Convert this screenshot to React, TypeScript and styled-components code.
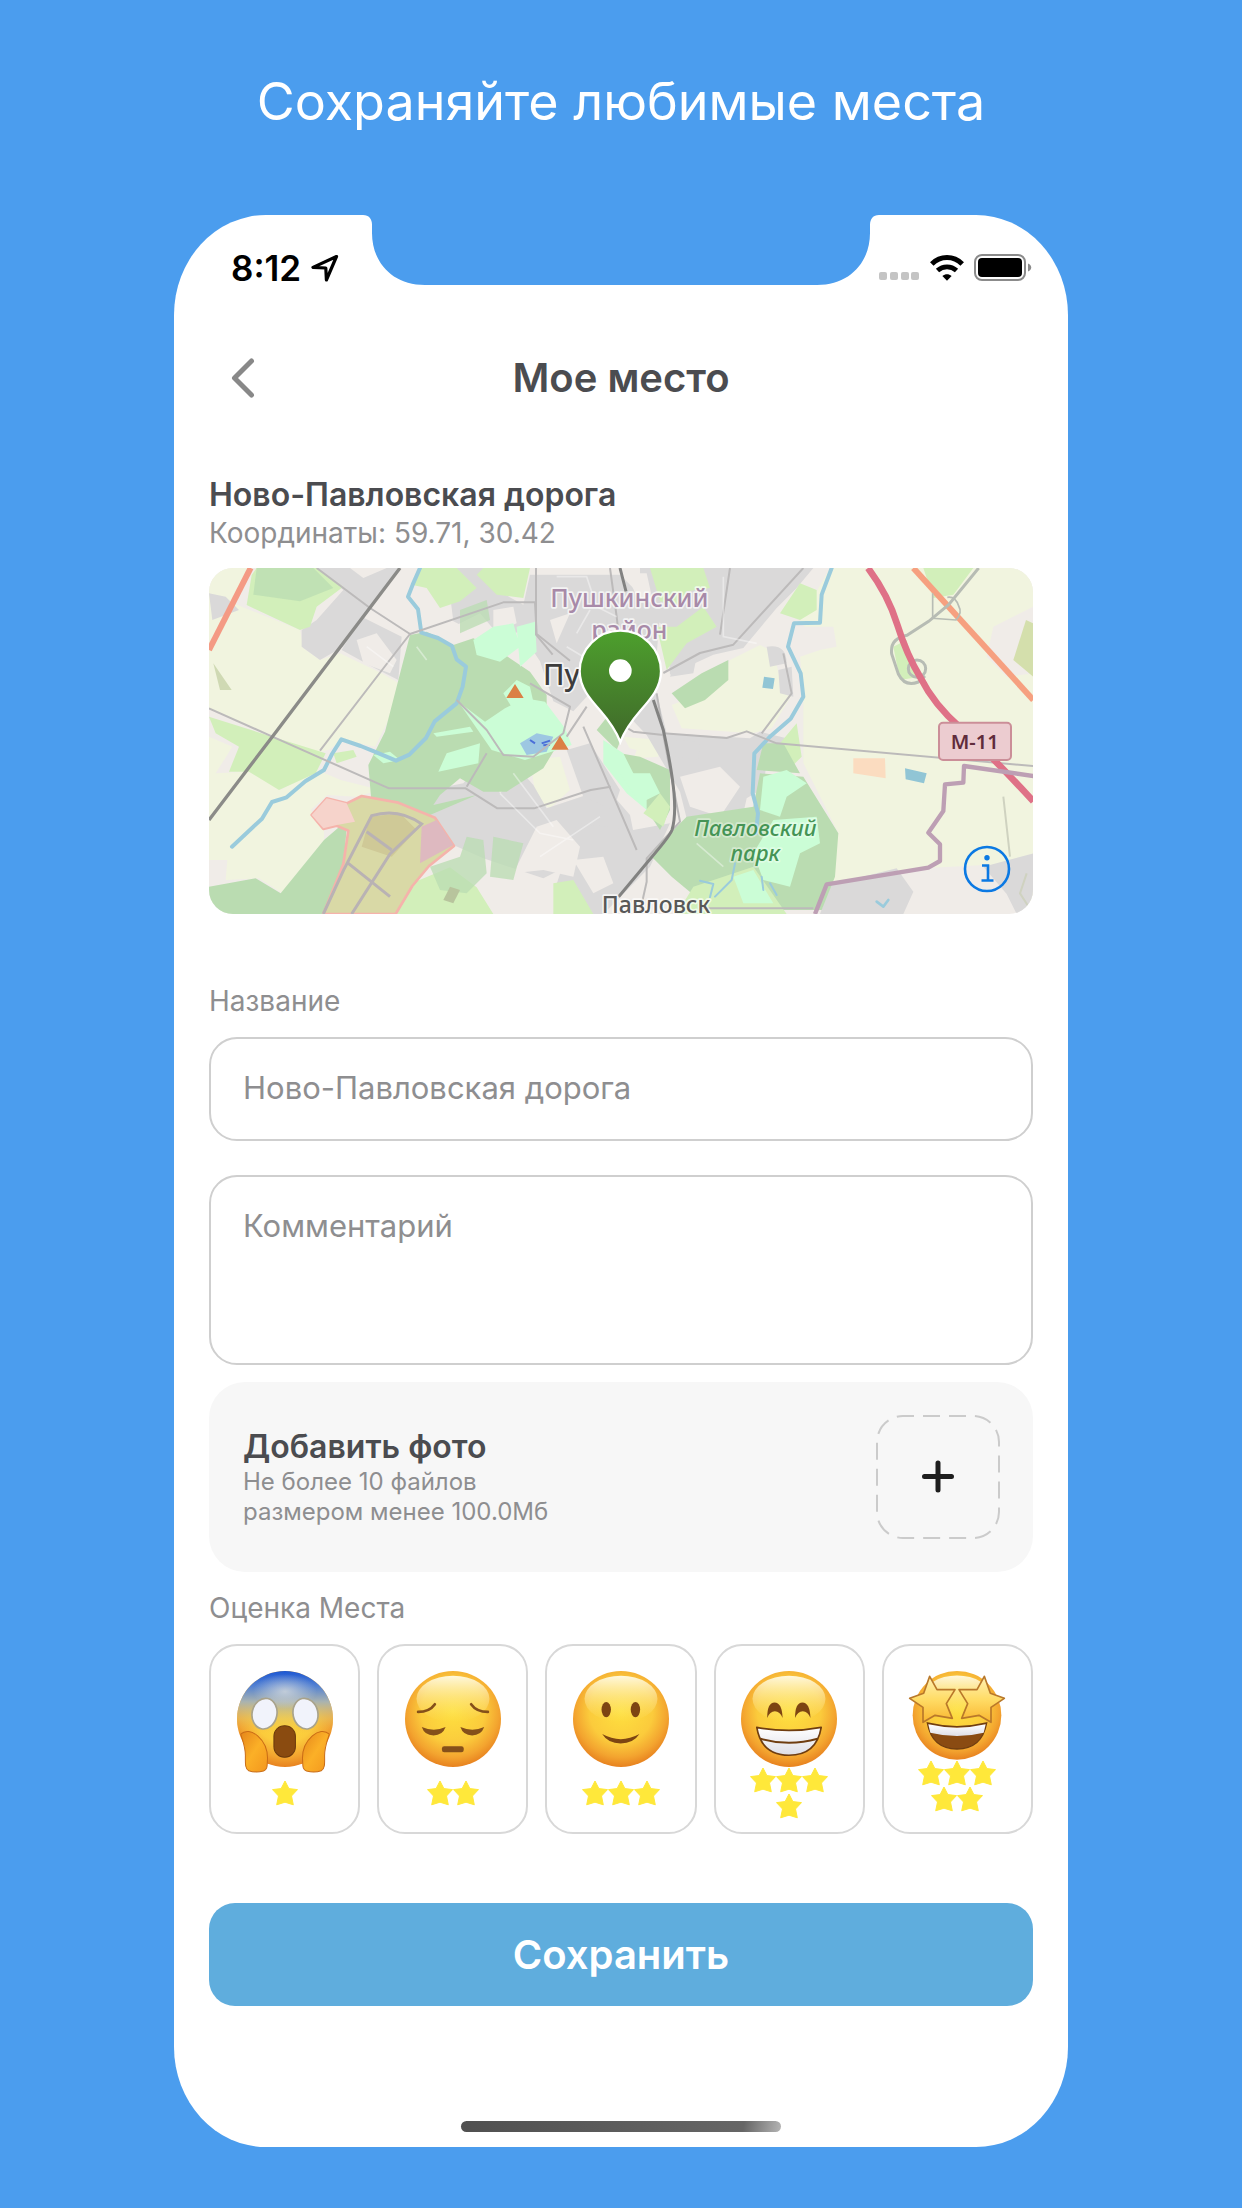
import React, { ReactNode } from "react";
import styled, { createGlobalStyle } from "styled-components";

const GlobalStyle = createGlobalStyle`
  *, *::before, *::after { box-sizing: border-box; }
  body {
    margin: 0;
    background: #4b9dee;
    font-family: Inter, "Noto Sans", sans-serif;
    -webkit-font-smoothing: antialiased;
  }
  button, input, textarea { font-family: inherit; }
`;

const Page = styled.main`
  min-height: 100vh;
  padding: 68px 174px 60px;
  background: #4b9dee;
`;

const Headline = styled.h1`
  margin: 0 0 79px;
  color: #fff;
  font-size: 52px;
  font-weight: 400;
  line-height: 68px;
  text-align: center;
  white-space: nowrap;
`;

const Phone = styled.section`
  display: flex;
  flex-direction: column;
  background: #fff;
  border-radius: 92px / 100px;
  overflow: hidden;
`;

const StatusBar = styled.div`
  display: grid;
  grid-template-columns: 1fr 516px 1fr;
  align-items: start;
  height: 110px;
`;

const StatusSide = styled.div<{ $end?: boolean }>`
  display: flex;
  align-items: center;
  justify-content: ${(p) => (p.$end ? "flex-end" : "flex-start")};
  gap: 10px;
  padding: ${(p) => (p.$end ? "32px 36px 0 0" : "32px 0 0 57px")};
  height: 74px;
`;

const Clock = styled.time`
  color: #000;
  font-size: 35px;
  font-weight: 600;
  line-height: 42px;
`;

const Notch = styled.svg`
  display: block;
  width: 516px;
  height: 71px;
`;

const NavBar = styled.header`
  display: grid;
  grid-template-columns: 68px 1fr 68px;
  align-items: center;
  height: 106px;
  padding: 0 35px;
`;

const BackButton = styled.button`
  display: flex;
  justify-content: center;
  padding: 8px 0;
  border: 0;
  background: none;
`;

const NavTitle = styled.h2`
  margin: 0;
  color: #4b4c50;
  font-size: 40px;
  font-weight: 600;
  line-height: 52px;
  text-align: center;
`;

const Content = styled.form`
  display: flex;
  flex-direction: column;
  padding: 44px 35px 16px;
`;

const SectionTitle = styled.h3`
  margin: 0;
  color: #4b4c50;
  font-size: 32px;
  font-weight: 600;
  line-height: 40px;
`;

const Caption = styled.p`
  margin: 0 0 17px;
  color: #8e8e90;
  font-size: 28px;
  line-height: 36px;
`;

const MapCard = styled.div`
  position: relative;
  margin-bottom: 69px;
  height: 346px;
  border-radius: 24px;
  overflow: hidden;
  & > svg { display: block; width: 100%; height: 100%; }
`;

const InfoButton = styled.button`
  position: absolute;
  right: 22px;
  bottom: 21px;
  display: block;
  width: 48px;
  height: 48px;
  padding: 0;
  border: 0;
  background: none;
`;

const FieldLabel = styled.label`
  margin-bottom: 18px;
  color: #8e8e90;
  font-size: 28px;
  line-height: 36px;
`;

const TextInput = styled.input`
  height: 104px;
  margin-bottom: 34px;
  padding: 0 32px 4px;
  border: 2px solid #cfcfcf;
  border-radius: 28px;
  background: #fff;
  color: #8e8e90;
  font-size: 31px;
  outline: none;
`;

const TextBox = styled.textarea`
  height: 190px;
  margin-bottom: 17px;
  padding: 29px 32px;
  border: 2px solid #cfcfcf;
  border-radius: 28px;
  background: #fff;
  color: #8e8e90;
  font-size: 31px;
  line-height: 40px;
  resize: none;
  outline: none;
  &::placeholder { color: #8e8e90; opacity: 1; }
`;

const PhotoCard = styled.section`
  display: flex;
  align-items: center;
  justify-content: space-between;
  height: 190px;
  margin-bottom: 18px;
  padding: 0 33px 0 34px;
  border-radius: 36px;
  background: #f7f7f7;
`;

const PhotoHint = styled.p`
  margin: 0;
  color: #8e8e90;
  font-size: 24px;
  line-height: 30px;
`;

const AddButton = styled.button`
  display: block;
  width: 124px;
  height: 124px;
  padding: 0;
  border: 0;
  background: none;
`;

const Ratings = styled.fieldset`
  margin: 0 0 69px;
  padding: 0;
  border: 0;
  min-width: 0;
`;

const RatingsLegend = styled.legend`
  padding: 0 0 18px;
  color: #8e8e90;
  font-size: 28px;
  line-height: 36px;
`;

const RatingRow = styled.div`
  display: grid;
  grid-template-columns: repeat(5, 1fr);
  gap: 17px;
`;

const RatingCard = styled.label`
  display: flex;
  flex-direction: column;
  align-items: center;
  height: 190px;
  padding-top: 25px;
  border: 2px solid #d8d8d8;
  border-radius: 28px;
`;

const HiddenRadio = styled.input`
  position: absolute;
  width: 1px;
  height: 1px;
  margin: 0;
  opacity: 0;
`;

const Face = styled.svg`
  display: block;
  flex: none;
  width: 96px;
  overflow: visible;
`;

const Stars = styled.span`
  display: flex;
  flex: none;
  flex-wrap: wrap;
  align-content: center;
  justify-content: center;
  width: 78px;
  height: 52px;
`;

const SaveButton = styled.button`
  height: 103px;
  border: 0;
  border-radius: 26px;
  background: #5faddd;
  color: #fff;
  font-size: 40px;
  font-weight: 600;
`;

const HomeBar = styled.div`
  align-self: center;
  width: 320px;
  height: 11px;
  margin: 99px 0 15px;
  border-radius: 6px;
  background: linear-gradient(100deg, #505050 0%, #666 88%, #b4b4b4 100%);
`;

const PaintStore = styled.svg`
  position: absolute;
  width: 0;
  height: 0;
`;

function LocationArrow() {
  return (
    <svg width="28" height="28" viewBox="0 0 28 28" fill="none" stroke="#000" strokeWidth="3.2" strokeLinejoin="round">
      <path d="M25.5 2.5 2 13.4l12.8.6.6 12z" />
    </svg>
  );
}

function SignalDots() {
  return (
    <svg width="41" height="28" viewBox="0 0 41 28" fill="#c4c4c4">
      {[0, 11, 22, 32].map((x) => (
        <rect key={x} x={x} y="18" width="8" height="8" rx="2" />
      ))}
    </svg>
  );
}

function WifiIcon() {
  return (
    <svg width="34" height="26" viewBox="0 0 34 26">
      <path d="M1.800 9C6 4.800 11.200 2.600 17 2.600S28 4.800 32.200 9" fill="none" stroke="#000" strokeWidth="5" />
      <path d="M7.500 15.600c2.700-2.500 5.800-3.800 9.500-3.800s6.800 1.300 9.500 3.800" fill="none" stroke="#000" strokeWidth="4.800" />
      <path d="M12.400 21c2.800-2.400 6.400-2.400 9.200 0L17 25.800z" />
    </svg>
  );
}

function BatteryIcon() {
  return (
    <svg width="58" height="28" viewBox="0 0 58 28">
      <rect x="1" y="1" width="50" height="25" rx="7" fill="none" stroke="#8b8b8b" strokeWidth="2" />
      <rect x="4" y="4" width="44" height="19" rx="4" />
      <path d="M54 9.500c4.300 1.400 4.300 6.600 0 8z" fill="#8b8b8b" />
    </svg>
  );
}

function Star() {
  return (
    <svg width="26" height="26" viewBox="0 0 26 26">
      <path
        d="M13 1l3.900 7.600 8.600 1-6 6.400 1.800 8.800-8.300-2.600-8.300 2.600L6.500 16l-6-6.400 8.600-1z"
        fill="#ffe83a"
        stroke="#ffe83a"
        strokeLinejoin="round"
      />
    </svg>
  );
}

function EmojiPaints() {
  return (
    <PaintStore aria-hidden="true">
      <defs>
        <radialGradient id="skin" cx="50%" cy="42%" r="60%">
          <stop offset="0" stopColor="#fee03f" />
          <stop offset=".55" stopColor="#fbcb3c" />
          <stop offset=".8" stopColor="#f3a42f" />
          <stop offset="1" stopColor="#e57b1c" />
        </radialGradient>
        <linearGradient id="shine" x1="0" y1="0" x2="0" y2="1">
          <stop offset="0" stopColor="#fffbe6" stopOpacity=".95" />
          <stop offset="1" stopColor="#ffe878" stopOpacity="0" />
        </linearGradient>
        <linearGradient id="fright" x1="0" y1="0" x2="0" y2="1">
          <stop offset="0" stopColor="#1c57d3" />
          <stop offset=".16" stopColor="#5482d2" />
          <stop offset=".32" stopColor="#a9b3b0" />
          <stop offset=".5" stopColor="#e3bf62" stopOpacity=".6" />
          <stop offset=".65" stopColor="#f0b040" stopOpacity="0" />
        </linearGradient>
        <radialGradient id="frost" cx="50%" cy="50%" r="50%">
          <stop offset="0" stopColor="#cfd6dc" stopOpacity=".85" />
          <stop offset="1" stopColor="#cfd6dc" stopOpacity="0" />
        </radialGradient>
        <linearGradient id="hand" x1="0" y1="0" x2="1" y2="1">
          <stop offset="0" stopColor="#e5851b" />
          <stop offset=".5" stopColor="#fbb027" />
          <stop offset="1" stopColor="#f3961d" />
        </linearGradient>
        <linearGradient id="starEye" x1="0" y1="0" x2="0" y2="1">
          <stop offset="0" stopColor="#fff0b4" />
          <stop offset=".5" stopColor="#ffdc66" />
          <stop offset="1" stopColor="#f9b52e" />
        </linearGradient>
        <linearGradient id="teeth" x1="0" y1="0" x2="0" y2="1">
          <stop offset="0" stopColor="#fff" />
          <stop offset="1" stopColor="#dedee6" />
        </linearGradient>
      </defs>
    </PaintStore>
  );
}

function Head({ cx, cy, r }: { cx: number; cy: number; r: number }) {
  return (
    <>
      <circle cx={cx} cy={cy} r={r} fill="url(#skin)" />
      <ellipse cx={cx} cy={cy - r * 0.42} rx={r * 0.76} ry={r * 0.48} fill="url(#shine)" />
    </>
  );
}

function ScaredFace() {
  return (
    <Face viewBox="110 124 286 286" height="96">
      <circle cx="253" cy="267" r="143" fill="url(#skin)" />
      <circle cx="253" cy="267" r="143" fill="url(#fright)" />
      <ellipse cx="253" cy="185" rx="95" ry="52" fill="url(#frost)" />
      <ellipse cx="192" cy="251" rx="37" ry="46" transform="rotate(12 192 251)" fill="#f1f3fb" stroke="#a9a38c" strokeWidth="5" />
      <ellipse cx="314" cy="251" rx="37" ry="46" transform="rotate(-12 314 251)" fill="#f1f3fb" stroke="#a9a38c" strokeWidth="5" />
      <rect x="220" y="287" width="64" height="94" rx="31" fill="#8a4b10" stroke="#6b3a0c" strokeWidth="3" />
      <path d="M121 312c28-26 80 16 80 72-2 20 2 32-12 38-16 4-30 4-44-1-12-6-10-24-10-46 0-24-8-44-14-63z" fill="url(#hand)" stroke="#c96c16" strokeWidth="3" />
      <path d="M385 312c-28-26-80 16-80 72 2 20-2 32 12 38 16 4 30 4 44-1 12-6 10-24 10-46 0-24 8-44 14-63z" fill="url(#hand)" stroke="#c96c16" strokeWidth="3" />
    </Face>
  );
}

function PensiveFace() {
  return (
    <Face viewBox="615 124 286 286" height="96">
      <Head cx={758} cy={267} r={143} />
      <g fill="none" stroke="#85501a" strokeWidth="8" strokeLinecap="round">
        <path d="M654 246q34 0 50-23" />
        <path d="M862 246q-34 0-50-23" />
      </g>
      <g fill="#85501a">
        <path d="M665 291q36 16 71 0-9 25-36 25t-35-25z" />
        <path d="M780 291q36 16 71 0-9 25-36 25t-35-25z" />
        <rect x="725" y="348" width="65" height="18" rx="7" />
      </g>
    </Face>
  );
}

function SmileFace() {
  return (
    <Face viewBox="1120 124 286 286" height="96">
      <Head cx={1263} cy={267} r={143} />
      <ellipse cx="1219" cy="239" rx="14" ry="23" fill="#7d4512" />
      <ellipse cx="1306" cy="239" rx="14" ry="23" fill="#7d4512" />
      <path d="M1207 312q55 30 111 0-18 28-56 28t-55-28z" fill="#7d4512" />
    </Face>
  );
}

function GrinFace() {
  return (
    <Face viewBox="366 124 286 286" height="96">
      <Head cx={509} cy={267} r={143} />
      <g fill="#7d4512">
        <path d="M444 264q0-46 22-46t24 46q-8-20-23-20t-23 20z" />
        <path d="M527 264q0-46 22-46t24 46q-8-20-23-20t-23 20z" />
      </g>
      <path d="M413 292q96 18 192 0-14 83-96 83t-96-83z" fill="url(#teeth)" stroke="#6f3d10" strokeWidth="5" strokeLinejoin="round" />
      <path d="M424 326q85 24 170 0" fill="none" stroke="#6f3d10" strokeWidth="6" />
    </Face>
  );
}

function StarStruckFace() {
  const eye = "M932 140l22 40h54l-26 42 18 44-52-9-36 21v-45l-40-27 42-15z";
  return (
    <Face viewBox="870 124 288 267" height="89">
      <Head cx={1014} cy={257} r={133} />
      <path d="M925 280q89 22 178 0-14 78-89 78t-89-78z" fill="#8a4b12" stroke="#6f3d10" strokeWidth="4" />
      <path d="M928 284q86 20 172 0l-6 25q-80 20-160 0z" fill="url(#teeth)" />
      <g fill="url(#starEye)" stroke="#b9782a" strokeWidth="5" strokeLinejoin="round">
        <path d={eye} />
        <path d={eye} transform="translate(2028 0) scale(-1 1)" />
      </g>
    </Face>
  );
}

const ratings: { name: string; stars: number; face: ReactNode }[] = [
  { name: "Ужасно", stars: 1, face: <ScaredFace /> },
  { name: "Плохо", stars: 2, face: <PensiveFace /> },
  { name: "Нормально", stars: 3, face: <SmileFace /> },
  { name: "Хорошо", stars: 4, face: <GrinFace /> },
  { name: "Отлично", stars: 5, face: <StarStruckFace /> },
];

const town = "#dad9d9";
const field = "#f1f4df";
const wood = "#badcb1";
const grass = "#d2efba";
const park = "#cbfdd6";
const soil = "#f0ece8";

// Three map units make one CSS pixel.
function TownMap() {
  return (
    <svg viewBox="27 324 2472 1038" preserveAspectRatio="xMidYMid slice" role="img" aria-label="Карта">
      <defs>
        <linearGradient id="pin" x1="0" y1="0" x2="0" y2="1">
          <stop offset="0" stopColor="#4d9f2d" />
          <stop offset="1" stopColor="#40692a" />
        </linearGradient>
      </defs>
      <rect x="27" y="324" width="2473" height="1038" fill={soil} />

      {/* Farmland */}
      <g fill={field}>
        <path d="M27 324h130L100 430l200 80 10 55 50 35 60-20 125 60 70 40-90 180-95-20-45 30-45 10L27 745z" />
        <path d="M27 830l70 30-50 80 100-5 95 55 110-60 70 30 120 30-75 20-85-5-50 45 40 50v40l-80 100-45 60-70-45-100 5 5-60H27z" />
        <path d="M1890 324h610v1010l-130-120-190 10-290 45 25-150-105-210V700l-10-110 60-20-60-90z" />
        <path d="M1590 600l90-45 40 20 20 80 35 50-60 100-60 15-210-15-30-70 80-30 70-50 20-40z" />
        <path d="M1270 830l110 10-5 50-70 5zM990 900l90-10 30 100-60 55-40-20z" />
      </g>
      <path d="M1770 500l130 0 10 60-130 25zM2380 500l120-60v200l-80 10-60-60z" fill={soil} />

      {/* Built-up areas */}
      <g fill={town}>
        <path d="M350 324h250L430 560l-70 40-55-40 0-50 45-30 80-90z" />
        <path d="M27 400l50 10 40 40-80 30zM425 570l60-100 120 60-10 130-70-35z" />
        <path d="M740 324h120l20 60 90 50 20-90h270l120 120-10 120-60 70-80-20-110 120-60-30-40-120-60-90-80 30-120-60z" />
        <path d="M1580 324h260l-50 60-60 60-100 120-90 20-130 60-10-140-80-60v-120z" />
        <path d="M1240 720l130-20 30 120 250 15 30-20 80 20-60 70-10 80-50 30-20 90-150 10-30-120-100-170z" />
        <path d="M690 990l100-20 70-80 60-5 80 90 40 70 180-60 70 80 30 150-80 60-150-50-60 30-180-60-90-40-90-60z" />
        <path d="M1100 870l70-20 90 140-20 60-90-40zM1130 1090l170 20 110-20-60 130-140 142h-60l-80-90z" />
        <path d="M1430 600q60-40 60-10l-10 50-70 10zM1700 560q60-10 60 50l-50 10zM1735 630l40-10 5 90-40-10zM1430 840l70 5-5 55-70-10z" />
        <path d="M1890 1275l200-50 50 70-30 67H1860zM2350 1220l150-40v182h-50l-30-60z" />
      </g>

      {/* Soft openings between the blocks */}
      <g fill={soil}>
        <path d="M470 540l60-20 60 80-20 40-80-30zM760 500l80-40 60 70-80 30zM450 324l110 0-70 30zM880 450l60-10 10 50-70 30zM1050 480l60-20-40 90zM1280 340l60 0 20 90-50-20zM1010 1100l60-20 70 80-20 90-90-20-90 10zM1440 950l120-30 60 60-60 90-90-30zM860 930l40-20 40 50-40 40zM1270 860l40 10-10 30zM1120 1200l90-10 30 80-60 30zM860 1290l30-60 90 30-20 102h-50z" />
      </g>

      {/* Grass */}
      <g fill={grass}>
        <path d="M170 324h180l80 56-80 60-20 60-30 10-160-75 15-90z" />
        <path d="M27 770l190 60 160 50-30 60-110 50-90-55h-60l30-75-70-40z" />
        <path d="M660 324h110l60 60-50 40-60 20-40-60-45-10zM850 324h140l-20 90-80-10-60-60zM1350 324h160l20 60-70 10-20 40-60-10zM1800 370l50 20 0 60-50 30-60-20z" />
        <path d="M1060 1270l60-10 60 102h-120zM590 1362l40-90 120-50 80 60 50 80zM400 880l60-10 10 20-60 20zM2170 324h150l-60 80-60 10zM1740 850l50-60 15 100-60 60z" />
        <path d="M2080 560l40-20 10 60 30 50-60 10zM1370 500l60 0 80-60 40 60-90 50-60 80z" />
      </g>

      {/* Woods */}
      <g fill={wood}>
        <path d="M630 525l50-10 80 40 60-20 80 40 90 60 50 70 0 60 50 60-60 100-110 70-70 0-70-40-60 50-20 30 130-30-140 60-110 20-65-50-10-120 50-100z" />
        <path d="M27 1280l140-25 75 45 130-160 70-60-10 120-60 162H27z" />
        <path d="M170 324h170l60 60-100 40-140-20zM780 450l80-30 10 60-90 40zM880 1130l90 20-30 110-70-10zM690 1220l90-30 20-60 50 10 10 100-60 60-80-10z" fillOpacity=".75" />
        <path d="M1260 880l60 10 90 40 0 120-30 60-60-90zM1370 1160l90-90 200-30 20-100 130 10 105 170-10 130-40 100h-330l-120-100-60-60z" />
        <path d="M1415 700l90-60 80-40 0 60-70 60-60 25zM1690 850l60 0 50 90-130-10zM1230 760l40 60-20 50-60-60z" />
      </g>
      <g fill={grass}>
        <path d="M1480 1280l180-60 100 142h-330zM1330 1060l50-60 30 40-20 60z" />
      </g>

      {/* Parks */}
      <g fill={park}>
        <path d="M820 540l60-40 60-10 20 70-60 45-70-20zM950 500l55-15 5 90-50 45z" />
        <path d="M775 725l80 60 60-40 60-30 60 10 60 80 20 50-60 20-80 25-100-30zM740 880l100-30-5 60-120 25zM520 885l50-10 30 25-50 10z" />
        <path d="M910 700l40-40 40 20 20 90-70-20zM700 820l110-20 10 15-110 15z" />
        <path d="M1210 840l60 40 30 60 40 60 0 50-60-50-70-90zM1690 950l70-20 60 40-60 40-20 60-60-20zM1720 1080l130-10 10 80-60 30-30 100-80-20-30-80z" />
        <path d="M1260 940l90 0 30 60-60 30zM1600 1250l60-20 60 100h-90z" />
      </g>

      {/* Reserve */}
      <path d="M335 1065l45-50 60 15 45-22 110 20 110 45 57 85-75 60-50 60-50 84H370l60-150 15-100-35-15-40 10z" fill="#d9d9a6" stroke="#f5b3ab" strokeWidth="8" strokeLinejoin="round" />
      <path d="M335 1065l45-50 60 15 25 55-55 10-40 10z" fill="#f6d3cb" />
      <path d="M665 1100l45-20 50 75-100 55z" fill="#deb9c0" />
      <path d="M510 1070l90-10 50 50-75 80-90-30z" fill="#cfc997" />

      {/* Small plots */}
      <g>
        <path d="M1960 895l95 0 2 60-97-15z" fill="#fbdcc0" />
        <path d="M2115 925l65 15-8 30-55-12zM1692 650l32 5-5 32-32-4z" fill="#91c5d5" />
        <path d="M2478 480l22 10v160l-60-50z" fill="#d4dfac" />
        <path d="M960 850l50-30 50 10-20 45-60 10z" fill="#9dc7e2" />
        <path d="M40 610l55 80-35 0z" fill="#cfd9b3" />
        <path d="M750 1280l30 10-20 40-30-10z" fill="#b8c49d" />
        <path d="M990 840l15 10m20 0l25-8m-20 14l20-2" fill="none" stroke="#4b6fd8" strokeWidth="6" />
      </g>

      {/* Water */}
      <g fill="none" stroke="#9acbdc" strokeLinejoin="round" strokeLinecap="round" strokeWidth="12">
        <path d="M660 324l-22 50-14 36 30 38 10 70 50 16 42 24 14 40 28 22-10 60-18 50-66 54-26 50-50 50-40 18-66-28-40-16-58-20-28 44-24 48-56 34-56 48-44 14-30 50-90 84" />
        <path d="M1895 324l-30 80-5 84-78 2-18 70 38 80 8 70-38 66-64 56-45 48-5 120 16 60-6 60" />
        <path d="M1605 1210l-10 50-50 50M1500 1262l40 10-10 40M1685 1250l5 40m20-20l20 35" strokeWidth="6" />
        <path d="M2030 1325l20 15 15-20" strokeWidth="8" />
      </g>

      {/* Minor roads */}
      <g fill="none" stroke="#bcbaba" strokeWidth="6" strokeLinejoin="round">
        <path d="M27 745l190 85 350 155h230l95 60 110 0 170-55 60-10" />
        <path d="M350 324l160 120 120 78 280-95h95l5 95 100 80" />
        <path d="M630 522l-70 90-200 260M1008 324v200l50 60" />
        <path d="M770 720l90 90 50 75 90 5 90-70 20-80-120-70M1100 830l60-90M860 880l-60 100" />
        <path d="M1810 324l-210 230-100 25-110 60M1370 700l20 120 190 14 60-20 90 36 770 68" />
        <path d="M1390 825l50 260-100 110v70l-20 90M1240 780l60 35 90 10M1750 580l25 120-90 120" />
        <path d="M1260 560l-10-90-20-146M1590 324l-30 200M1150 800l100 230 60 140M1500 1345l340 0" />
        <path d="M2410 1010l20 180M2480 1240l-20 60 40 62" stroke="#cfd2c0" />
      </g>
      <g fill="none" stroke="#fff" strokeWidth="5" opacity=".4">
        <path d="M1070 350h90l30 90 60 30M1100 560l100 60M1130 520l40-70M500 560l80 60M1570 350v180l100 20M900 1000l120 120 100 20M940 940l120 160M1020 1190l180-120M1490 1150l80 70M650 560l30 40" />
      </g>
      <g fill="none" stroke="#b9b2b4" strokeWidth="9">
        <path d="M370 1362l60-130 85-165q80-25 150 25l-95 90-115 180M445 1210l125 100M500 1115l75 55" />
      </g>

      {/* Railways */}
      <path d="M600 324L217 830 27 1080" fill="none" stroke="#8b8b88" strokeWidth="10" />
      <path d="M1260 324l18 70M1360 720l30 90q26 120 32 190t-6 110q-8 20-60 80l-100 120" fill="none" stroke="#828281" strokeWidth="9" />

      {/* Highways */}
      <path d="M152 324L27 570" fill="none" stroke="#f49a84" strokeWidth="18" />
      <path d="M2140 324l360 396" fill="none" stroke="#f6a080" strokeWidth="18" />
      <g fill="none" stroke="#b7bcb4">
        <path d="M2336 324l-90 110-60 50-65 42q-52 10-46 56l20 60q20 40 60 24l20-18" strokeWidth="9" />
        <circle cx="2151" cy="626" r="26" strokeWidth="9" />
        <path d="M2198 400v75l70 5q20-22 8-42-10-30-34-26" strokeWidth="5" />
      </g>
      <path d="M2004 324q60 80 88 170t70 160q40 80 120 150t218 220" fill="none" stroke="#df7187" strokeWidth="20" />

      {/* District border */}
      <path d="M2500 948l-208-30-2 50-55 5-5 80-45 65 35 35 0 50-35 20-305 50-35 89" fill="none" stroke="#bd9fb4" strokeWidth="13" strokeLinejoin="round" />

      <g fill="#db8045">
        <path d="M945 672l26 42h-52zM1080 827l26 42h-52z" />
      </g>

      {/* Place names */}
      <g fontFamily="'Noto Sans', sans-serif" fontWeight="500" textAnchor="middle" paintOrder="stroke" stroke="#fff" strokeOpacity=".7" strokeWidth="10" strokeLinejoin="round">
        <text x="1288" y="440" fontSize="75" fill="#a88aa8">Пушкинский</text>
        <text x="1288" y="537" fontSize="75" fill="#a88aa8">район</text>
        <text x="1084" y="675" fontSize="87" fill="#3c3c3c">Пу</text>
        <text x="1368" y="1360" fontSize="69" fill="#585858">Павловск</text>
        <g fontStyle="italic" fill="#459455" strokeOpacity=".4">
          <text x="1666" y="1127" fontSize="66">Павловский</text>
          <text x="1666" y="1203" fontSize="66">парк</text>
        </g>
      </g>
      <rect x="2217" y="788" width="216" height="112" rx="12" fill="#ecccd0" stroke="#cb8e98" strokeWidth="6" />
      <text x="2324" y="866" fontSize="60" fontWeight="600" textAnchor="middle" fontFamily="'Noto Sans', sans-serif" fill="#602c3c">М-11</text>

      <path
        d="M1261 512a122 122 0 0 1 122 122c0 48-30 82-62 118-26 30-46 56-60 94-14-38-34-64-60-94-32-36-62-70-62-118a122 122 0 0 1 122-122z"
        fill="url(#pin)"
        stroke="#fff"
        strokeWidth="7"
      />
      <circle cx="1261" cy="632" r="34" fill="#fff" />
    </svg>
  );
}

export default function App() {
  return (
    <Page>
      <GlobalStyle />
      <EmojiPaints />
      <Headline>Сохраняйте любимые места</Headline>
      <Phone>
        <StatusBar>
          <StatusSide>
            <Clock>8:12</Clock>
            <LocationArrow />
          </StatusSide>
          <Notch viewBox="0 0 516 71" aria-hidden="true">
            <path d="M0 0c6 0 9 4 9 10v8c0 29 20 52 53 52h392c33 0 53-23 53-52v-8c0-6 3-10 9-10z" fill="#4b9dee" />
          </Notch>
          <StatusSide $end>
            <SignalDots />
            <WifiIcon />
            <BatteryIcon />
          </StatusSide>
        </StatusBar>
        <NavBar>
          <BackButton type="button" aria-label="Назад">
            <svg width="24" height="40" viewBox="0 0 24 40" fill="none" stroke="#888" strokeWidth="5" strokeLinecap="round" strokeLinejoin="round">
              <path d="M20.500 3 3.500 20l17 17" />
            </svg>
          </BackButton>
          <NavTitle>Мое место</NavTitle>
        </NavBar>
        <Content>
          <SectionTitle>Ново-Павловская дорога</SectionTitle>
          <Caption>Координаты: 59.71, 30.42</Caption>
          <MapCard>
            <TownMap />
            <InfoButton type="button" aria-label="О карте">
              <svg width="48" height="48" viewBox="0 0 48 48" fill="none" stroke="#0b79e3" strokeWidth="2.600">
                <circle cx="24" cy="24" r="22" />
                <path d="M19 20.500h6v15M18.500 35.500h12" />
                <circle cx="24" cy="12.800" r="2.700" fill="#0b79e3" stroke="none" />
              </svg>
            </InfoButton>
          </MapCard>
          <FieldLabel htmlFor="place-name">Название</FieldLabel>
          <TextInput id="place-name" defaultValue="Ново-Павловская дорога" />
          <TextBox aria-label="Комментарий" placeholder="Комментарий" />
          <PhotoCard>
            <div>
              <SectionTitle>Добавить фото</SectionTitle>
              <PhotoHint>
                Не более 10 файлов
                <br />
                размером менее 100.0Мб
              </PhotoHint>
            </div>
            <AddButton type="button" aria-label="Добавить фото">
              <svg width="124" height="124" viewBox="0 0 124 124" fill="none">
                <rect x="1" y="1" width="122" height="122" rx="26" stroke="#cbcbcb" strokeWidth="2" strokeDasharray="17 9" strokeDashoffset="6" />
                <path d="M62 48v27M48.500 61.500h27" stroke="#1e1e1e" strokeWidth="5" strokeLinecap="round" />
              </svg>
            </AddButton>
          </PhotoCard>
          <Ratings>
            <RatingsLegend>Оценка Места</RatingsLegend>
            <RatingRow>
              {ratings.map((r) => (
                <RatingCard key={r.stars}>
                  <HiddenRadio type="radio" name="rating" value={r.stars} aria-label={r.name} />
                  {r.face}
                  <Stars>
                    {Array.from({ length: r.stars }, (_, i) => (
                      <Star key={i} />
                    ))}
                  </Stars>
                </RatingCard>
              ))}
            </RatingRow>
          </Ratings>
          <SaveButton type="button">Сохранить</SaveButton>
        </Content>
        <HomeBar />
      </Phone>
    </Page>
  );
}
